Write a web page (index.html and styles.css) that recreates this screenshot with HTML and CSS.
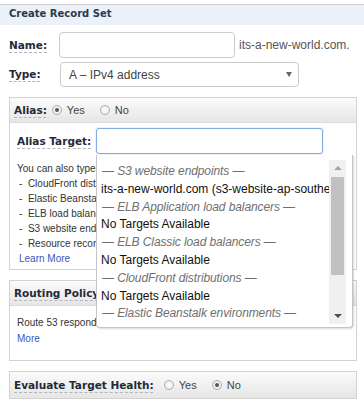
FILE: index.html
```html
<!DOCTYPE html>
<html lang="en">
<head>
    <meta charset="UTF-8">
    <meta name="viewport" content="width=device-width, initial-scale=1.0">
    <title>Create Record Set</title>
    <link rel="stylesheet" href="styles.css">
</head>
<body>
    <div class="title">Create Record Set</div>

    <div class="form">
        <div class="row">
            <span class="label">Name:</span>
            <div class="input name-input"></div>
            <span class="suffix">its-a-new-world.com.</span>
        </div>
        <div class="row">
            <span class="label">Type:</span>
            <div class="select">
                <span>A &ndash; IPv4 address</span>
                <span class="caret"></span>
            </div>
        </div>
    </div>

    <div class="panel">
        <div class="panel-head">
            <span class="label">Alias:</span>
            <span class="radio checked"></span><span class="opt">Yes</span>
            <span class="radio"></span><span class="opt">No</span>
        </div>
        <div class="panel-body alias-body">
            <div class="target-row">
                <span class="label">Alias Target:</span>
                <div class="input target-input"></div>

                <!-- open suggestion list, lies over the help text -->
                <div class="dropdown">
                    <div class="options">
                        <div class="group">&mdash; S3 website endpoints &mdash;</div>
                        <div class="item">its-a-new-world.com (s3-website-ap-southeast-2.amazonaws.com)</div>
                        <div class="group">&mdash; ELB Application load balancers &mdash;</div>
                        <div class="item">No Targets Available</div>
                        <div class="group">&mdash; ELB Classic load balancers &mdash;</div>
                        <div class="item">No Targets Available</div>
                        <div class="group">&mdash; CloudFront distributions &mdash;</div>
                        <div class="item">No Targets Available</div>
                        <div class="group">&mdash; Elastic Beanstalk environments &mdash;</div>
                    </div>
                    <div class="scrollbar">
                        <span class="arrow up"></span>
                        <span class="thumb"></span>
                        <span class="arrow down"></span>
                    </div>
                </div>
            </div>
            <div class="help">
                <div>You can also type the domain name for the resource. Examples:</div>
                <div class="ex">-&nbsp;&nbsp;CloudFront distribution domain name: d111111abcdef8.cloudfront.net</div>
                <div class="ex">-&nbsp;&nbsp;Elastic Beanstalk environment CNAME: example.elasticbeanstalk.com</div>
                <div class="ex">-&nbsp;&nbsp;ELB load balancer DNS name: example-1.us-east-2.elb.amazonaws.com</div>
                <div class="ex">-&nbsp;&nbsp;S3 website endpoint: s3-website.us-east-2.amazonaws.com</div>
                <div class="ex">-&nbsp;&nbsp;Resource record set in this hosted zone: www.example.com</div>
                <a class="link ex" href="#">Learn More</a>
            </div>
        </div>
    </div>

    <div class="panel">
        <div class="panel-head">
            <span class="label">Routing Policy:</span>
        </div>
        <div class="panel-body routing-body">
            <div>Route 53 responds to queries based only on the values in this record. <a class="link" href="#">Learn</a></div>
            <a class="link" href="#">More</a>
        </div>
    </div>

    <div class="panel">
        <div class="panel-head health">
            <span class="label">Evaluate Target Health:</span>
            <span class="radio"></span><span class="opt">Yes</span>
            <span class="radio checked"></span><span class="opt">No</span>
        </div>
    </div>
</body>
</html>
```

FILE: styles.css
```css
* {
    margin: 0;
    padding: 0;
    box-sizing: border-box;
}

body {
    font-family: "Liberation Sans", Arial, sans-serif;
    background-color: #fff;
    color: #333;
    width: 364px;
    overflow: hidden;
}

.title {
    margin-top: 4px;
    height: 21px;
    border-top: 1px solid #cfcfcf;
    background-color: #eaf1fb;
    padding: 3px 0 0 9px;
    font-family: "DejaVu Sans", Verdana, sans-serif;
    font-size: 10px;
    font-weight: bold;
    color: #2c3a48;
}

.label {
    font-family: "DejaVu Sans", Verdana, sans-serif;
    font-size: 10.5px;
    font-weight: bold;
    color: #1f2b38;
    line-height: 13px;
    text-decoration: underline dashed #b5b5b5;
    text-underline-offset: 3px;
}

.form {
    padding: 7px 0 0 9px;
    display: flex;
    flex-direction: column;
    gap: 4px;
}

.row {
    display: flex;
    align-items: center;
}

.row .label {
    width: 50px;
}

.input {
    height: 26px;
    border: 1px solid #ccc;
    border-radius: 4px;
    background: #fff;
}

.name-input {
    width: 176px;
}

.suffix {
    margin-left: 4px;
    font-size: 12px;
    color: #555;
}

.select {
    width: 239px;
    height: 25px;
    margin-left: 1px;
    border: 1px solid #ccc;
    border-radius: 4px;
    display: flex;
    align-items: center;
    justify-content: space-between;
    padding: 0 6px 0 8px;
    font-size: 12px;
    color: #444;
}

.caret {
    width: 0;
    height: 0;
    border-left: 3px solid transparent;
    border-right: 3px solid transparent;
    border-top: 5px solid #666;
}

.panel {
    margin: 10px 0 0 9px;
    width: 348px;
    border: 1px solid #d2d2d2;
}

.panel-head {
    height: 25px;
    display: flex;
    align-items: center;
    padding-left: 4px;
    background: linear-gradient(#fbfbfb, #e6e6e6);
    border-bottom: 1px solid #dcdcdc;
}

.panel-head.health {
    height: 26px;
    border-bottom: none;
}

.panel-head .label {
    margin-right: 5px;
}

.panel-head.health .label {
    margin-right: 10px;
}

.radio {
    width: 10px;
    height: 10px;
    border: 1px solid #adadad;
    border-radius: 50%;
    background: radial-gradient(#fff, #e4e4e4);
    display: inline-flex;
    align-items: center;
    justify-content: center;
    margin-right: 5px;
}

.radio.checked::after {
    content: "";
    width: 4px;
    height: 4px;
    border-radius: 50%;
    background: #555;
}

.opt {
    font-size: 11px;
    color: #444;
    margin-right: 15px;
}

.panel-body {
    padding: 5px 0 0 7px;
}

.target-row {
    position: relative;
    display: flex;
    align-items: center;
}

.target-row .label {
    width: 79px;
    flex: none;
}

.target-input {
    width: 227px;
    border: 1px solid #86abe3;
    border-radius: 3px;
    box-shadow: 0 0 2px #b9d0f3;
}

.help {
    margin-top: 7px;
    padding-bottom: 3px;
    font-size: 10px;
    line-height: 15px;
    color: #333;
    white-space: nowrap;
    overflow: hidden;
}

.help .ex {
    padding-left: 2px;
    display: block;
}

.link {
    color: #3b57b8;
    text-decoration: none;
}

.routing-body {
    height: 54px;
    padding-top: 9px;
    font-size: 10px;
    line-height: 16px;
    white-space: nowrap;
    overflow: hidden;
}

/* open suggestion list */
.dropdown {
    position: absolute;
    left: 79px;
    top: 27px;
    width: 257px;
    height: 173px;
    background: #fff;
    border: 1px solid #c4c4c4;
    border-top: none;
    border-radius: 0 0 4px 4px;
    box-shadow: 1px 1px 2px rgba(0, 0, 0, 0.15);
    display: flex;
    padding: 5px 6px 3px 4px;
    z-index: 2;
}

.options {
    flex: 1;
    overflow: hidden;
    white-space: nowrap;
    font-size: 12px;
    line-height: 17.8px;
    padding-top: 3px;
}

.group {
    color: #707070;
    font-style: italic;
    padding-left: 1px;
    letter-spacing: -0.1px;
}

.item {
    color: #111;
}

.scrollbar {
    width: 17px;
    flex: none;
    background: #f0f0f0;
    display: flex;
    flex-direction: column;
    align-items: center;
    padding: 6px 0;
}

.arrow {
    width: 0;
    height: 0;
    border-left: 4px solid transparent;
    border-right: 4px solid transparent;
}

.arrow.up {
    border-bottom: 4px solid #a3a3a3;
}

.arrow.down {
    border-top: 4px solid #505050;
    margin-top: auto;
}

.thumb {
    width: 13px;
    height: 98px;
    margin-top: 7px;
    background: #c1c1c1;
}
```
